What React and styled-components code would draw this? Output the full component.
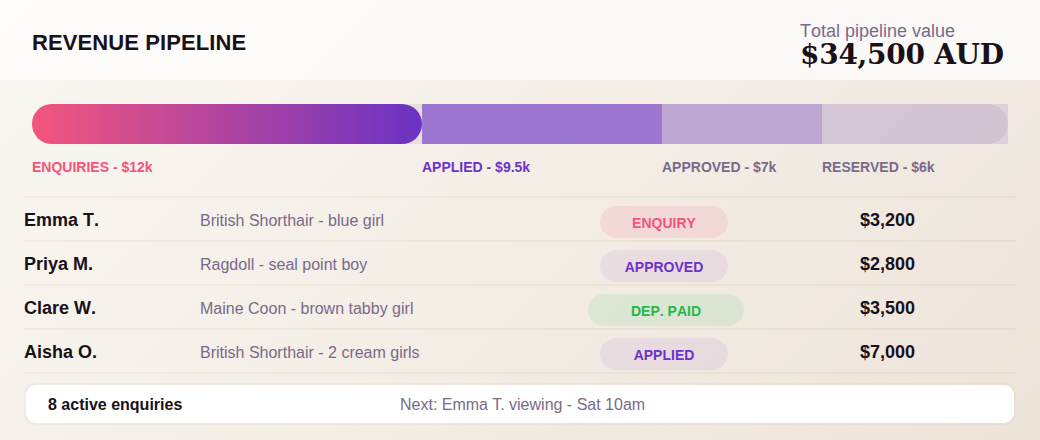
import React from 'react';
import styled, { createGlobalStyle } from 'styled-components';

const sans = `'Liberation Sans', Arial, sans-serif`;

const GlobalStyle = createGlobalStyle`
  html, body {
    margin: 0;
    padding: 0;
  }
  body {
    width: 1040px;
    height: 440px;
    overflow: hidden;
    background: #faf7f2;
    font-family: ${sans};
  }
`;

const Page = styled.div`
  width: 1040px;
  height: 440px;
  box-sizing: border-box;
  background: linear-gradient(135deg, #faf7f2 0%, #ede4da 100%);
  color: #1a1018;
`;

const Header = styled.header`
  height: 80px;
  box-sizing: border-box;
  padding: 0 36px 0 32px;
  display: flex;
  align-items: center;
  justify-content: space-between;
  background: rgba(255, 255, 255, 0.7);
`;

const Title = styled.h1`
  margin: 6px 0 0;
  font-size: 22px;
  font-weight: 700;
  letter-spacing: 0.1px;
`;

const Total = styled.div`
  display: flex;
  flex-direction: column;
  width: 204px;
  padding-top: 10px;
`;

const TotalLabel = styled.span`
  font-size: 18px;
  line-height: 20px;
  font-kerning: none;
  color: #7a6a8a;
`;

const TotalValue = styled.span`
  font-family: 'DejaVu Serif', serif;
  font-size: 28px;
  line-height: 28px;
  font-weight: 700;
  letter-spacing: -0.01em;
  white-space: nowrap;
`;

const Funnel = styled.section`
  padding: 24px 32px 0;
`;

const Bar = styled.div`
  display: grid;
  grid-template-columns: 390px 240px 160px 186px;
  height: 40px;
  border-radius: 20px;
  background: rgba(122, 106, 128, 0.12);
`;

const Segment = styled.div`
  background: ${({ $fill }) => $fill};
  border-radius: ${({ $radius }) => $radius || 0};
`;

const StageLabels = styled.div`
  display: grid;
  grid-template-columns: 390px 240px 160px 186px;
  margin-top: 14px;
`;

const StageLabel = styled.span`
  font-size: 14px;
  line-height: 18px;
  font-weight: 700;
  color: ${({ $color }) => $color};
`;

const Rows = styled.div`
  margin: 20px 24px 0;
  border-top: 2px solid rgba(190, 150, 110, 0.1);
`;

const Row = styled.div`
  display: grid;
  grid-template-columns: 176px 376px 176px 1fr;
  align-items: center;
  padding-top: 2px;
  height: 40px;
  border-bottom: 2px solid rgba(190, 150, 110, 0.1);
`;

const Name = styled.span`
  font-size: 18px;
  font-weight: 700;
  font-kerning: none;
`;

const Breed = styled.span`
  font-size: 16px;
  padding-top: 2px;
  color: #7a6a8a;
`;

const BadgeCell = styled.div`
  display: flex;
  justify-content: center;
  align-self: end;
  margin-bottom: 2px;
`;

const Badge = styled.span`
  width: ${({ $wide }) => ($wide ? '156px' : '128px')};
  margin-left: ${({ $wide }) => ($wide ? '4px' : '0')};
  height: 32px;
  box-sizing: border-box;
  padding-top: 2px;
  border-radius: 16px;
  display: flex;
  align-items: center;
  justify-content: center;
  font-size: 14px;
  font-weight: 700;
  font-kerning: none;
  color: ${({ $color }) => $color};
  background: ${({ $bg }) => $bg};
`;

const Amount = styled.span`
  padding-left: 108px;
  font-size: 18px;
  font-weight: 700;
`;

const Footer = styled.footer`
  margin: 9px 24px 0;
  height: 42px;
  box-sizing: border-box;
  padding: 2px 22px 0;
  display: grid;
  grid-template-columns: 352px 1fr;
  align-items: center;
  background: #fff;
  border: 2px solid rgba(190, 150, 110, 0.08);
  background-clip: padding-box;
  border-radius: 12px;
  font-size: 16px;
`;

const Count = styled.span`
  font-weight: 700;
`;

const Next = styled.span`
  color: #7a6a8a;
`;

const stages = [
  { label: 'ENQUIRIES - $12k', color: '#f4547c', fill: 'linear-gradient(90deg, #f4567c, #6a32c4)', radius: '20px' },
  { label: 'APPLIED - $9.5k', color: '#6d32c8', fill: 'rgba(109, 50, 200, 0.6)' },
  { label: 'APPROVED - $7k', color: '#7a6a8a', fill: 'rgba(109, 50, 200, 0.31)' },
  { label: 'RESERVED - $6k', color: '#7a6a8a', fill: 'rgba(109, 50, 200, 0.12)' },
];

const pink = { color: '#f4547c', bg: 'rgba(244, 84, 124, 0.12)' };
const violet = { color: '#6d32c8', bg: 'rgba(109, 50, 200, 0.08)' };
const green = { color: '#22b84a', bg: 'rgba(34, 184, 74, 0.1)' };

const enquiries = [
  { name: 'Emma T.', breed: 'British Shorthair - blue girl', status: 'ENQUIRY', tone: pink, amount: '$3,200' },
  { name: 'Priya M.', breed: 'Ragdoll - seal point boy', status: 'APPROVED', tone: violet, amount: '$2,800' },
  { name: 'Clare W.', breed: 'Maine Coon - brown tabby girl', status: 'DEP. PAID', tone: green, amount: '$3,500', wide: true },
  { name: 'Aisha O.', breed: 'British Shorthair - 2 cream girls', status: 'APPLIED', tone: violet, amount: '$7,000' },
];

export default function App() {
  return (
    <Page>
      <GlobalStyle />
      <Header>
        <Title>REVENUE PIPELINE</Title>
        <Total>
          <TotalLabel>Total pipeline value</TotalLabel>
          <TotalValue>$34,500 AUD</TotalValue>
        </Total>
      </Header>
      <Funnel>
        <Bar>
          {stages.map(stage => (
            <Segment key={stage.label} $fill={stage.fill} $radius={stage.radius} />
          ))}
        </Bar>
        <StageLabels>
          {stages.map(stage => (
            <StageLabel key={stage.label} $color={stage.color}>
              {stage.label}
            </StageLabel>
          ))}
        </StageLabels>
      </Funnel>
      <Rows>
        {enquiries.map(item => (
          <Row key={item.name}>
            <Name>{item.name}</Name>
            <Breed>{item.breed}</Breed>
            <BadgeCell>
              <Badge $color={item.tone.color} $bg={item.tone.bg} $wide={item.wide}>
                {item.status}
              </Badge>
            </BadgeCell>
            <Amount>{item.amount}</Amount>
          </Row>
        ))}
      </Rows>
      <Footer>
        <Count>8 active enquiries</Count>
        <Next>Next: Emma T. viewing - Sat 10am</Next>
      </Footer>
    </Page>
  );
}
